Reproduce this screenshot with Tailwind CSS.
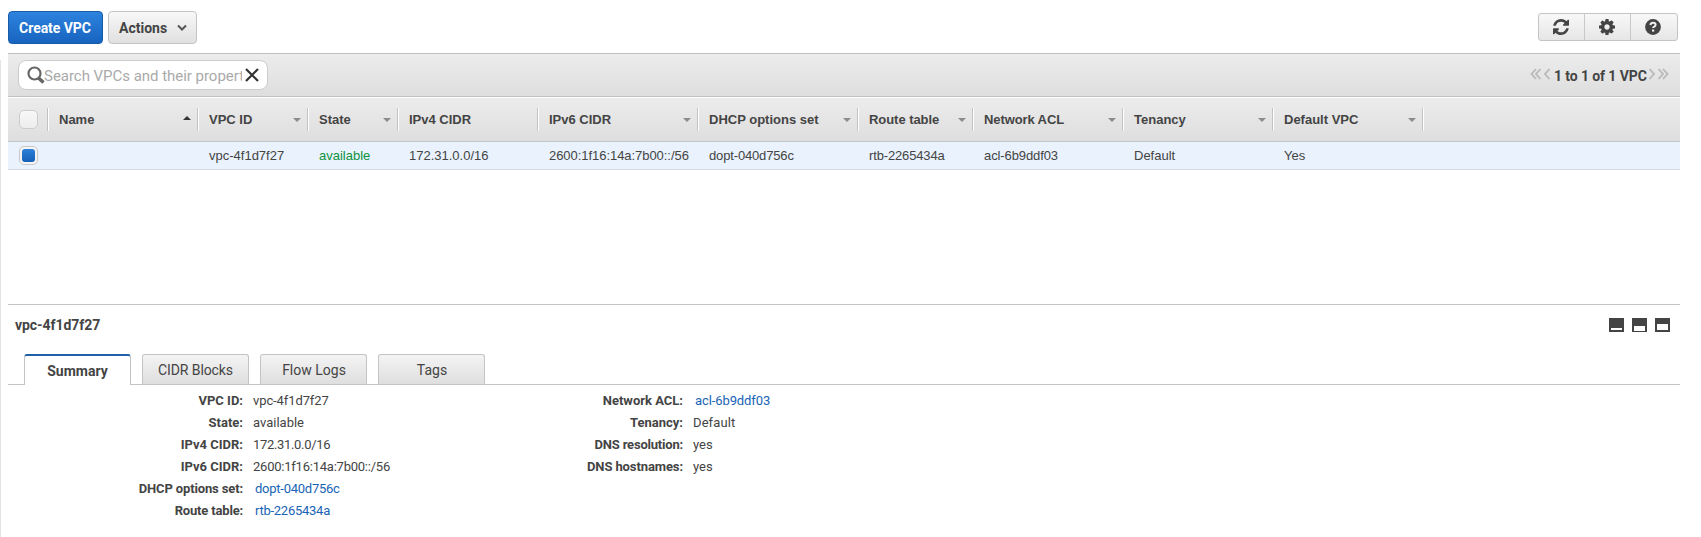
<!DOCTYPE html>
<html lang="en">
<head>
<meta charset="utf-8">
<title>VPC</title>
<script src="https://cdn.jsdelivr.net/npm/@tailwindcss/browser@4"></script>
</head>
<body class="h-[537px] overflow-hidden bg-white font-[Roboto,sans-serif] text-[#444]">
<svg class="hidden">
  <symbol id="down" viewBox="0 0 8 4"><path d="M0 0h8L4 4z" fill="currentColor"/></symbol>
</svg>
<div class="flex h-full">
<div class="mt-[60px] w-px shrink-0 bg-[#e4e4e4]"></div>
<main class="ml-[7px] flex w-[1672px] flex-col pt-[11px]">
  <div class="flex h-[33px] items-center">
    <button class="flex h-[33px] w-[95px] items-center justify-center rounded-[4px] border border-[#1a5ba8] bg-linear-to-b from-[#2d83de] to-[#1764c0] text-sm font-bold text-white"><span class="pr-px tracking-[-0.05px]">Create VPC</span></button>
    <button class="ml-[5px] flex h-[33px] w-[89px] items-center rounded-[4px] border border-[#c4c4c4] bg-linear-to-b from-[#f8f8f8] to-[#e0e0e0] pl-[10px] text-sm font-bold"><span class="w-[48px]">Actions</span><svg class="ml-[10px]" width="10" height="8" viewBox="0 0 10 8"><path d="M1 1.500l4 4 4-4" fill="none" stroke="#555" stroke-width="2"/></svg></button>
    <div class="mr-[2px] mb-px ml-auto flex h-7 w-[140px] rounded-[3px] border border-[#c4c4c4] bg-linear-to-b from-[#f8f8f8] to-[#e6e6e6]">
      <button class="flex w-[46px] items-center justify-center border-r border-[#c8c8c8] pr-px"><svg width="16" height="16" viewBox="0 0 1536 1536"><path fill="#444" d="M1511 928q0 5-1 7-64 268-268 434.500T764 1536q-146 0-282.500-55T238 1324l-129 129q-19 19-45 19t-45-19-19-45V960q0-26 19-45t45-19h448q26 0 45 19t19 45-19 45l-137 137q71 66 161 102t187 36q134 0 250-65t186-179q11-17 53-117 8-23 30-23h192q13 0 22.500 9.500t9.500 22.500zm25-800v448q0 26-19 45t-45 19h-448q-26 0-45-19t-19-45 19-45l138-138Q969 256 768 256q-134 0-250 65T332 500q-11 17-53 117-8 23-30 23H50q-13 0-22.500-9.500T18 608v-7q65-268 270-434.500T768 0q146 0 284 55.500T1297 212l130-129q19-19 45-19t45 19 19 45z"/></svg></button>
      <button class="flex w-[46px] items-center justify-center border-r border-[#c8c8c8] pr-px"><svg width="16" height="16" viewBox="0 0 1536 1536"><path fill="#444" d="M1024 768q0-106-75-181t-181-75-181 75-75 181 75 181 181 75 181-75 75-181zm512-109v222q0 12-8 23t-20 13l-185 28q-19 54-39 91 35 50 107 138 10 12 10 25t-9 23q-27 37-99 108t-94 71q-12 0-26-9l-138-108q-44 23-91 38-16 136-29 186-7 28-36 28H657q-14 0-24.500-8.500T621 1506l-28-184q-49-16-90-37l-141 107q-10 9-25 9-14 0-25-11-126-114-165-168-7-10-7-23 0-12 8-23 15-21 51-66.500t54-70.500q-27-50-41-99L29 913q-13-2-21-12.500T0 877V655q0-12 8-23t19-13l186-28q14-46 39-92-40-57-107-138-10-12-10-24 0-10 9-23 26-36 98.500-107.500T337 135q13 0 26 10l138 107q44-23 91-38 16-136 29-186 7-28 36-28h222q14 0 24.500 8.500T915 30l28 184q49 16 90 37l142-107q9-9 24-9 13 0 25 10 129 119 165 170 7 8 7 22 0 12-8 23-15 21-51 66.500t-54 70.500q26 50 41 98l183 28q13 2 21 12.500t8 23.500z"/></svg></button>
      <button class="flex w-[46px] items-center justify-center pr-[2px]"><svg width="16" height="16" viewBox="0 0 16 16"><circle cx="8" cy="8" r="7.900" fill="#444"/><path d="M5.400 6q.3-2.200 2.700-2.200 2.500 0 2.500 1.900 0 1.200-1.300 1.900-1.200.6-1.200 1.500" fill="none" stroke="#efefef" stroke-width="2"/><path d="M7 10.500h2.200v2.100H7z" fill="#efefef"/></svg></button>
    </div>
  </div>

  <div class="mt-[9px] flex h-11 shrink-0 items-center border-y border-[#c0c0c0] bg-linear-to-b from-[#ececec] to-[#dedede] pl-[10px]">
    <div class="flex h-[30px] w-[250px] items-center rounded-[8px] border border-[#ccc] bg-white">
      <svg class="ml-[8px] shrink-0" width="18" height="18" viewBox="0 0 18 18"><circle cx="7.500" cy="7.500" r="6" fill="none" stroke="#666" stroke-width="2.200"/><path d="M11.500 12l5 4.500" stroke="#666" stroke-width="3.600"/></svg>
      <span class="-ml-px w-[198px] shrink-0 overflow-hidden pt-[2px] text-[15px] tracking-[-0.03px] whitespace-nowrap text-[#aaa]">Search VPCs and their properties</span>
      <svg class="ml-[2px] shrink-0" width="16" height="16" viewBox="0 0 16 16"><path d="M2 2l12 12M14 2L2 14" stroke="#333" stroke-width="2.200"/></svg>
    </div>
    <div class="mr-[11px] ml-auto flex items-center text-sm font-bold">
      <svg class="mr-[3px] mb-[2px]" width="21" height="12" viewBox="0 0 21 12" fill="none" stroke="#b8b8b8" stroke-width="1.800"><path d="M6 1L1.500 6 6 11M10.500 1L6 6l4.500 5M19.500 1L15 6l4.500 5"/></svg>
      <span class="w-[91px] pt-[2px] tracking-[-0.1px] whitespace-nowrap">1 to 1 of 1 VPC</span>
      <svg class="mb-[2px] ml-[3px]" width="21" height="12" viewBox="0 0 21 12" fill="none" stroke="#b8b8b8" stroke-width="1.800"><path d="M1.500 1L6 6l-4.500 5M10.500 1L15 6l-4.500 5M15 1l4.500 5-4.500 5"/></svg>
    </div>
  </div>

  <div class="flex h-[45px] shrink-0 items-center border-t border-b border-t-white border-b-[#c0c5c8] bg-linear-to-b from-[#ececec] to-[#dedede] font-['Liberation_Sans',sans-serif] text-[13px] font-bold">
    <div class="flex h-[23px] w-[41px] items-center border-r border-white pl-[11px]"><span class="h-[19px] w-[19px] rounded-[5px] border border-[#ccc] bg-linear-to-b from-[#f8f8f8] to-[#ededed]"></span><i class="ml-auto h-full w-px bg-[#c2c2c2]"></i></div>
    <div class="flex h-[23px] w-[150px] items-center border-r border-white pl-[10px]">Name<svg class="mr-[6px] mb-[3px] ml-auto rotate-180 text-[#333]" width="8" height="4"><use href="#down"/></svg><i class="h-full w-px bg-[#c2c2c2]"></i></div>
    <div class="flex h-[23px] w-[110px] items-center border-r border-white pl-[10px]">VPC ID<svg class="mr-[6px] ml-auto text-[#8b8b8b]" width="8" height="4"><use href="#down"/></svg><i class="h-full w-px bg-[#c2c2c2]"></i></div>
    <div class="flex h-[23px] w-[90px] items-center border-r border-white pl-[10px]">State<svg class="mr-[6px] ml-auto text-[#8b8b8b]" width="8" height="4"><use href="#down"/></svg><i class="h-full w-px bg-[#c2c2c2]"></i></div>
    <div class="flex h-[23px] w-[140px] items-center border-r border-white pl-[10px]">IPv4 CIDR<i class="ml-auto h-full w-px bg-[#c2c2c2]"></i></div>
    <div class="flex h-[23px] w-[160px] items-center border-r border-white pl-[10px]">IPv6 CIDR<svg class="mr-[6px] ml-auto text-[#8b8b8b]" width="8" height="4"><use href="#down"/></svg><i class="h-full w-px bg-[#c2c2c2]"></i></div>
    <div class="flex h-[23px] w-[160px] items-center border-r border-white pl-[10px]">DHCP options set<svg class="mr-[6px] ml-auto text-[#8b8b8b]" width="8" height="4"><use href="#down"/></svg><i class="h-full w-px bg-[#c2c2c2]"></i></div>
    <div class="flex h-[23px] w-[115px] items-center border-r border-white pl-[10px] tracking-[-0.05px]">Route table<svg class="mr-[6px] ml-auto text-[#8b8b8b]" width="8" height="4"><use href="#down"/></svg><i class="h-full w-px bg-[#c2c2c2]"></i></div>
    <div class="flex h-[23px] w-[150px] items-center border-r border-white pl-[10px] tracking-[-0.1px]">Network ACL<svg class="mr-[6px] ml-auto text-[#8b8b8b]" width="8" height="4"><use href="#down"/></svg><i class="h-full w-px bg-[#c2c2c2]"></i></div>
    <div class="flex h-[23px] w-[150px] items-center border-r border-white pl-[10px]">Tenancy<svg class="mr-[6px] ml-auto text-[#8b8b8b]" width="8" height="4"><use href="#down"/></svg><i class="h-full w-px bg-[#c2c2c2]"></i></div>
    <div class="flex h-[23px] w-[150px] items-center border-r border-white pl-[10px]">Default VPC<svg class="mr-[6px] ml-auto text-[#8b8b8b]" width="8" height="4"><use href="#down"/></svg><i class="h-full w-px bg-[#c2c2c2]"></i></div>
  </div>

  <div class="flex h-7 shrink-0 items-center border-b border-[#d3d9df] bg-[#e9f2fd] font-['Liberation_Sans',sans-serif] text-[13px]">
    <div class="w-[41px] pl-[11px]"><span class="flex h-[19px] w-[19px] items-center justify-center rounded-[5px] border border-[#c8c8c8] bg-[#f4f4f4]"><i class="h-[13px] w-[13px] rounded-[3px] bg-linear-to-b from-[#2d80d8] to-[#1560b8]"></i></span></div>
    <div class="w-[150px]"></div>
    <div class="w-[110px] pl-[10px]">vpc-4f1d7f27</div>
    <div class="w-[90px] pl-[10px] text-[#0f933f]">available</div>
    <div class="w-[140px] pl-[10px]">172.31.0.0/16</div>
    <div class="w-[160px] pl-[10px] tracking-[-0.05px]">2600:1f16:14a:7b00::/56</div>
    <div class="w-[160px] pl-[10px] tracking-[-0.15px]">dopt-040d756c</div>
    <div class="w-[115px] pl-[10px] tracking-[-0.15px]">rtb-2265434a</div>
    <div class="w-[150px] pl-[10px] tracking-[-0.1px]">acl-6b9ddf03</div>
    <div class="w-[150px] pl-[10px]">Default</div>
    <div class="w-[150px] pl-[10px]">Yes</div>
  </div>

  <div class="mt-[134px] flex h-[50px] shrink-0 border-t border-[#c4c4c4] pt-[10px] pr-[10px] pl-[7px]">
    <h1 class="text-sm font-bold tracking-[-0.05px]">vpc-4f1d7f27</h1>
    <div class="mt-[3px] ml-auto flex h-[14px] gap-2">
      <svg width="15" height="14"><path fill="#444" fill-rule="evenodd" d="M0 0h15v14H0zM2 10h11v2H2z"/></svg>
      <svg width="15" height="14"><path fill="#444" fill-rule="evenodd" d="M0 0h15v14H0zM2 8h11v5H2z"/></svg>
      <svg width="15" height="14"><path fill="#444" fill-rule="evenodd" d="M0 0h15v14H0zM2 6h11v6H2z"/></svg>
    </div>
  </div>

  <div class="flex h-[31px] shrink-0 items-end border-b border-[#c4c4c4] pl-4 text-sm">
    <div class="-mb-px flex h-[31px] w-[107px] items-center justify-center rounded-t-[3px] border-x border-t-2 border-x-[#c4c4c4] border-t-[#1f60ab] bg-white pt-px font-bold">Summary</div>
    <div class="ml-[11px] flex h-[30px] w-[107px] items-center justify-center rounded-t-[3px] border border-b-0 border-[#c4c4c4] bg-linear-to-b from-[#f4f4f4] to-[#dedede] tracking-[-0.1px]">CIDR Blocks</div>
    <div class="ml-[11px] flex h-[30px] w-[107px] items-center justify-center rounded-t-[3px] border border-b-0 border-[#c4c4c4] bg-linear-to-b from-[#f4f4f4] to-[#dedede] pl-px">Flow Logs</div>
    <div class="ml-[11px] flex h-[30px] w-[107px] items-center justify-center rounded-t-[3px] border border-b-0 border-[#c4c4c4] bg-linear-to-b from-[#f4f4f4] to-[#dedede] pl-px">Tags</div>
  </div>

  <div class="flex pt-[5px] text-[13px] leading-[22px]">
    <dl class="grid w-[440px] auto-rows-[22px] grid-cols-[235px_1fr] gap-x-[10px]">
      <dt class="text-right font-bold">VPC ID:</dt><dd class="tracking-[-0.1px]">vpc-4f1d7f27</dd>
      <dt class="text-right font-bold">State:</dt><dd>available</dd>
      <dt class="text-right font-bold">IPv4 CIDR:</dt><dd class="tracking-[-0.33px]">172.31.0.0/16</dd>
      <dt class="text-right font-bold">IPv6 CIDR:</dt><dd class="tracking-[-0.23px]">2600:1f16:14a:7b00::/56</dd>
      <dt class="text-right font-bold tracking-[-0.13px]">DHCP options set:</dt><dd class="pl-[2px] tracking-[-0.25px] text-[#1964b5]">dopt-040d756c</dd>
      <dt class="text-right font-bold tracking-[-0.17px]">Route table:</dt><dd class="pl-[2px] tracking-[-0.26px] text-[#1964b5]">rtb-2265434a</dd>
    </dl>
    <dl class="grid w-[440px] auto-rows-[22px] grid-cols-[235px_1fr] gap-x-[10px]">
      <dt class="text-right font-bold">Network ACL:</dt><dd class="pl-[2px] tracking-[-0.1px] text-[#1964b5]">acl-6b9ddf03</dd>
      <dt class="text-right font-bold">Tenancy:</dt><dd class="tracking-[0.1px]">Default</dd>
      <dt class="text-right font-bold tracking-[-0.2px]">DNS resolution:</dt><dd>yes</dd>
      <dt class="text-right font-bold tracking-[-0.1px]">DNS hostnames:</dt><dd>yes</dd>
    </dl>
  </div>
</main>
</div>
</body>
</html>
